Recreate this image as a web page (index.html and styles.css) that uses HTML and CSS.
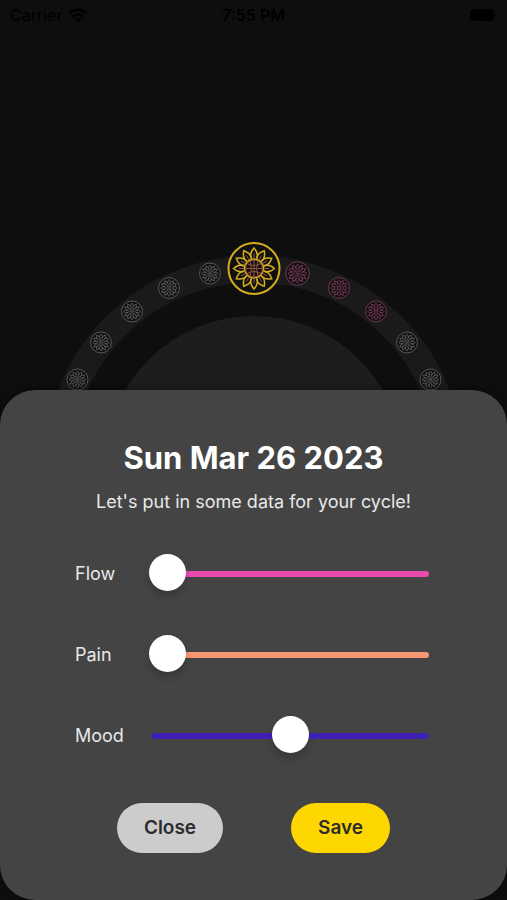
FILE: index.html
```html
<!DOCTYPE html>
<html lang="en">
<head>
<meta charset="utf-8">
<meta name="viewport" content="width=device-width, initial-scale=1">
<title>Cycle data</title>
<link rel="stylesheet" href="styles.css">
</head>
<body>
<main class="screen">
  <header class="status">
    <div class="carrier">
      <span>Carrier</span>
      <svg class="wifi" viewBox="0 0 20 15" aria-hidden="true">
        <path d="M1 5.5a13 13 0 0 1 18 0M4.2 8.8a8.400 8.400 0 0 1 11.600 0" fill="none" stroke="currentColor" stroke-width="2.600"/>
        <path d="M10 14.500 6.800 11.300a4.600 4.600 0 0 1 6.400 0z" fill="currentColor"/>
      </svg>
    </div>
    <time>7:55 PM</time>
    <svg class="battery" viewBox="0 0 27 12" aria-hidden="true">
      <rect width="24" height="12" rx="3.500" fill="currentColor"/>
      <path d="M25.200 4v4c1-.3 1.500-1 1.500-2s-.5-1.700-1.500-2z" fill="currentColor"/>
    </svg>
  </header>

  <svg class="wheel" viewBox="-254 -254 507 508" aria-hidden="true">
    <defs>
      <path id="petal" d="M-2.500-10C-4.500-13.500-3-17 0-20.500 3-17 4.500-13.500 2.500-10"/>
      <g id="petals">
        <use href="#petal"/>
        <use href="#petal" transform="rotate(30)"/>
        <use href="#petal" transform="rotate(60)"/>
        <use href="#petal" transform="rotate(90)"/>
        <use href="#petal" transform="rotate(120)"/>
        <use href="#petal" transform="rotate(150)"/>
        <use href="#petal" transform="rotate(180)"/>
        <use href="#petal" transform="rotate(210)"/>
        <use href="#petal" transform="rotate(240)"/>
        <use href="#petal" transform="rotate(270)"/>
        <use href="#petal" transform="rotate(300)"/>
        <use href="#petal" transform="rotate(330)"/>
      </g>
      <path id="veins" d="M0-10v-5M0 10v5M10 0h5M-10 0h-5M5-8.700l2.500-4.300M8.700-5l4.300-2.500M8.700 5l4.300 2.500M5 8.700l2.500 4.300M-5 8.700l-2.500 4.300M-8.700 5l-4.300 2.500M-8.700-5l-4.300-2.500M-5-8.700l-2.500-4.300"/>
      <g id="seeds">
        <circle r="8.500"/>
        <path d="M0-8.500v17M-8.500 0h17M-7-5Q0-1 7-5M-7 5Q0 1 7 5M-4-7.500Q-1 0-4 7.500M4-7.500Q1 0 4 7.500"/>
      </g>
      <g id="flower">
        <circle class="plate" r="25.500"/>
        <use href="#petals"/>
        <use class="core" href="#seeds"/>
      </g>
    </defs>
    <circle class="ring" r="196"/>
    <circle class="disc" r="149"/>
    <g class="day">
      <use href="#flower" transform="translate(-176.500 -85.500) scale(.41)"/>
      <use href="#flower" transform="translate(-153 -122.500) scale(.41)"/>
      <use href="#flower" transform="translate(-122 -153.500) scale(.41)"/>
      <use href="#flower" transform="translate(-85 -177) scale(.41)"/>
      <use href="#flower" transform="translate(-44 -191.500) scale(.41)"/>
      <use href="#flower" transform="translate(153 -122.500) scale(.41)"/>
      <use href="#flower" transform="translate(176.500 -85.500) scale(.41)"/>
    </g>
    <g class="day period">
      <use href="#flower" transform="translate(43.500 -191.500) scale(.46)"/>
      <use href="#flower" transform="translate(85 -177) scale(.41)"/>
      <use href="#flower" transform="translate(122 -153.500) scale(.41)"/>
    </g>
    <g class="today" transform="translate(0 -196.500)">
      <circle class="plate" r="25.500"/>
      <use class="detail" href="#veins"/>
      <use class="outline" href="#petals"/>
      <circle class="outline" r="9.500"/>
      <use class="detail" href="#seeds"/>
    </g>
  </svg>

  <form class="sheet">
    <h1>Sun Mar 26 2023</h1>
    <p>Let's put in some data for your cycle!</p>
    <div class="fields">
      <div class="field flow">
        <label for="flow">Flow</label>
        <input id="flow" type="range" min="0" max="10" value="0">
      </div>
      <div class="field pain">
        <label for="pain">Pain</label>
        <input id="pain" type="range" min="0" max="10" value="0">
      </div>
      <div class="field mood">
        <label for="mood">Mood</label>
        <input id="mood" type="range" min="0" max="10" value="5">
      </div>
    </div>
    <div class="actions">
      <button class="close" type="button">Close</button>
      <button class="save" type="button">Save</button>
    </div>
  </form>
</main>
</body>
</html>
```
FILE: styles.css
```css
* {
  box-sizing: border-box;
}

body {
  margin: 0;
  background: #0e0e0e;
  font-family: Inter, "Liberation Sans", sans-serif;
}

.screen {
  position: relative;
  min-height: 100vh;
  overflow: hidden;
}

.status {
  display: grid;
  grid-template-columns: 1fr auto 1fr;
  align-items: center;
  height: 30px;
  padding: 0 10px;
  color: #000;
  font-size: 16px;
}

.carrier {
  display: flex;
  align-items: center;
  gap: 6px;
}

.wifi {
  width: 20px;
  height: 15px;
}

.status time {
  font-weight: 600;
}

.battery {
  width: 27px;
  height: 12px;
  justify-self: end;
}

.wheel {
  display: block;
  width: 100%;
  max-width: 508px;
  margin: 181px auto 0;
  fill: none;
}

.ring {
  stroke: #1a1a1a;
  stroke-width: 27px;
}

.disc {
  fill: #1d1d1d;
}

.plate {
  fill: #101010;
}

.day {
  stroke: #666;
  stroke-width: 2px;
}

.core {
  stroke-width: 1px;
}

.period {
  stroke: #823b60;
}

.today {
  stroke: #d3ad1c;
  stroke-width: 2px;
}

.outline {
  stroke-width: 1.5px;
}

.detail {
  stroke: #96553f;
  stroke-width: 1px;
}

.sheet {
  position: absolute;
  right: 0;
  bottom: 0;
  left: 0;
  padding: 48px 75px 47px;
  border-radius: 35px;
  background: #444;
  box-shadow: 0 0 8px rgb(0 0 0 / 50%);
  color: #e8e8e8;
  font-size: 18px;
  line-height: 24px;
}

h1 {
  margin: 0 0 12px;
  color: #fff;
  font-size: 31px;
  font-weight: 700;
  line-height: 40px;
  text-align: center;
  white-space: nowrap;
}

p {
  margin: 0 -20px;
  text-align: center;
}

.fields {
  display: grid;
  gap: 42px;
  margin: 40px 0 48px;
}

.field {
  display: grid;
  grid-template-columns: 74px 1fr;
  align-items: center;
}

.field::before {
  grid-area: 1 / 2;
  height: 6px;
  margin: 0 3px 0 2px;
  border-radius: 3px;
  background: var(--track);
  content: "";
}

.flow {
  --track: #e84aae;
}

.pain {
  --track: #f79672;
}

.mood {
  --track: #3f22b5;
}

label {
  grid-area: 1 / 1;
}

input {
  z-index: 1;
  grid-area: 1 / 2;
  width: 100%;
  height: 37px;
  margin: 0 0 2px;
  appearance: none;
  background: none;
}

input::-webkit-slider-thumb {
  width: 37px;
  height: 37px;
  border-radius: 50%;
  appearance: none;
  background: #fff;
  box-shadow: 0 5px 8px rgb(0 0 0 / 20%);
}

.actions {
  display: flex;
  justify-content: center;
  gap: 68px;
}

button {
  height: 50px;
  padding: 0 27px;
  border: 0;
  border-radius: 25px;
  color: #2c2c2c;
  font: 600 19px/24px Inter, "Liberation Sans", sans-serif;
}

.close {
  background: #ccc;
}

.save {
  background: #ffd700;
}
```
